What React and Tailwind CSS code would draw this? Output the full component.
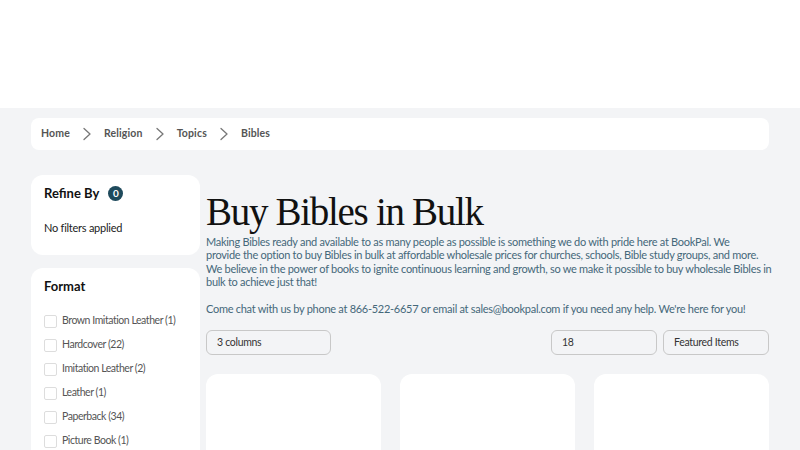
import React from "react";

const Chevron = () => (
  <svg width="10" height="14" viewBox="0 0 10 14" fill="none" className="mx-[12px]">
    <path d="M2 1.5L8 7L2 12.5" stroke="#777" strokeWidth="1.3" strokeLinecap="round" strokeLinejoin="round" />
  </svg>
);

const formats = [
  "Brown Imitation Leather (1)",
  "Hardcover (22)",
  "Imitation Leather (2)",
  "Leather (1)",
  "Paperback (34)",
  "Picture Book (1)",
];

export default function App() {
  return (
    <div className="w-[800px] h-[450px] overflow-hidden bg-[#f3f4f6]" style={{ fontFamily: "Lato, 'Noto Sans', sans-serif" }}>
      <div className="h-[108px] bg-white" />
      <div className="px-[31px] pt-[10px]">
        <div className="h-[32px] bg-white rounded-[8px] flex items-center pl-[10px] text-[10.5px] font-bold tracking-[0.15px] text-[#555]">
          <span>Home</span>
          <Chevron />
          <span>Religion</span>
          <Chevron />
          <span>Topics</span>
          <Chevron />
          <span>Bibles</span>
        </div>
        <div className="flex mt-[25px] gap-[6px]">
          <div className="w-[169px] flex flex-col gap-[13px]">
            <div className="bg-white rounded-[12px] h-[80px] px-[13px] pt-[9px]">
              <div className="flex items-center gap-[9px]">
                <span className="text-[13px] font-bold text-[#111]">Refine By</span>
                <span className="w-[15px] h-[15px] rounded-full bg-[#1f4a5c] text-white text-[10px] font-bold flex items-center justify-center">0</span>
              </div>
              <div className="mt-[16px] text-[11px] tracking-[-0.25px] text-[#222]">No filters applied</div>
            </div>
            <div className="bg-white rounded-[12px] h-[200px] px-[13px] pt-[9px]">
              <div className="text-[13px] font-bold text-[#111]">Format</div>
              <div className="mt-[18px] flex flex-col gap-[11px]">
                {formats.map((f) => (
                  <div key={f} className="flex items-center gap-[5px] h-[13px]">
                    <span className="shrink-0 w-[13px] h-[13px] border border-[#ddd] rounded-[2px] bg-white" />
                    <span className="text-[10.5px] tracking-[-0.45px] text-[#555] whitespace-nowrap">{f}</span>
                  </div>
                ))}
              </div>
            </div>
          </div>
          <div className="flex-1">
            <h1 className="text-[39px] leading-[46px] tracking-[-1.3px] text-[#111] mt-[14px]" style={{ fontFamily: "'Liberation Serif', serif" }}>Buy Bibles in Bulk</h1>
            <p className="mr-[-12px] text-[11px] tracking-[-0.28px] leading-[13.3px] text-[#45687a] whitespace-nowrap">
              Making Bibles ready and available to as many people as possible is something we do with pride here at BookPal. We<br />
              provide the option to buy Bibles in bulk at affordable wholesale prices for churches, schools, Bible study groups, and more.<br />
              We believe in the power of books to ignite continuous learning and growth, so we make it possible to buy wholesale Bibles in<br />
              bulk to achieve just that!
            </p>
            <p className="mt-[14px] text-[11px] tracking-[-0.28px] leading-[13.3px] text-[#45687a]">
              Come chat with us by phone at 866-522-6657 or email at sales@bookpal.com if you need any help. We're here for you!
            </p>
            <div className="flex mt-[15px] gap-[6px]">
              <div className="w-[125px] h-[25px] border border-[#c8c8c8] rounded-[6px] flex items-center px-[10px] text-[10.5px] tracking-[-0.3px] text-[#333]">3 columns</div>
              <div className="flex-1" />
              <div className="w-[106px] h-[25px] border border-[#c8c8c8] rounded-[6px] flex items-center px-[10px] text-[10.5px] tracking-[-0.3px] text-[#333]">18</div>
              <div className="w-[106px] h-[25px] border border-[#c8c8c8] rounded-[6px] flex items-center px-[10px] text-[10.5px] tracking-[-0.3px] text-[#333]">Featured Items</div>
            </div>
            <div className="grid grid-cols-3 gap-[19px] mt-[19px]">
              <div className="h-[120px] bg-white rounded-[12px]" />
              <div className="h-[120px] bg-white rounded-[12px]" />
              <div className="h-[120px] bg-white rounded-[12px]" />
            </div>
          </div>
        </div>
      </div>
    </div>
  );
}
